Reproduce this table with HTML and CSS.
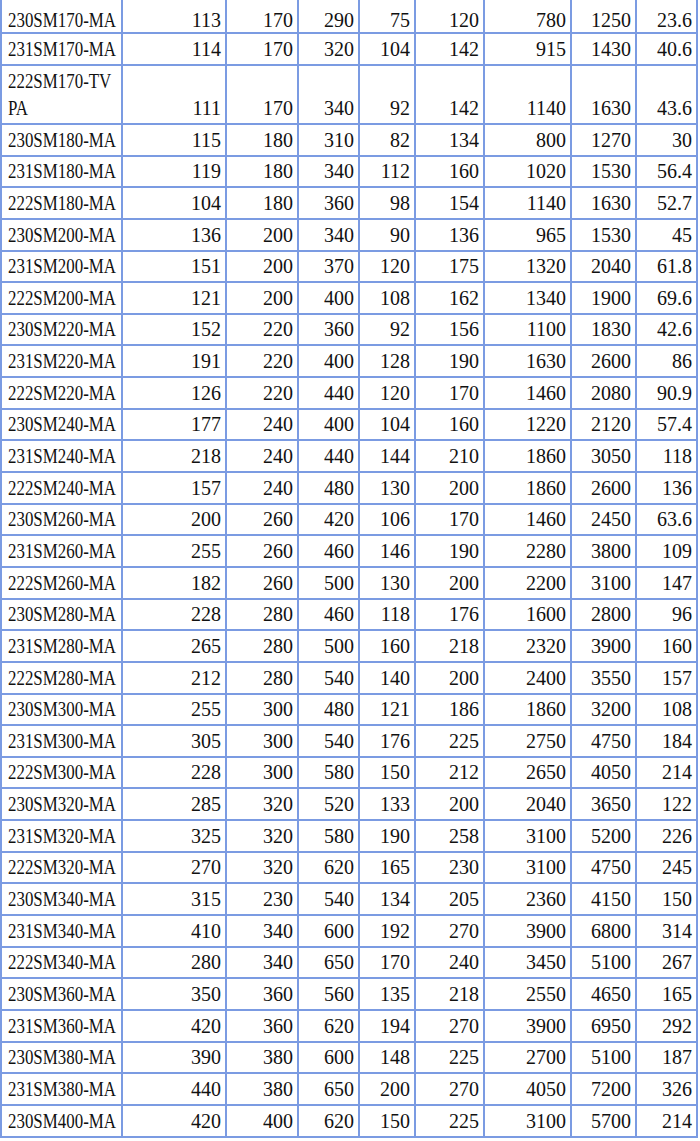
FILE: index.html
```html
<!DOCTYPE html>
<html lang="zh">
<head>
<meta charset="utf-8">
<title>Bearing table</title>
<link rel="stylesheet" href="styles.css">
</head>
<body>
<div class="sheet">
<div class="row first"><div class="c name"><span class="nm">230SM170-MA</span></div><div class="c">113</div><div class="c">170</div><div class="c">290</div><div class="c">75</div><div class="c">120</div><div class="c">780</div><div class="c">1250</div><div class="c">23.6</div></div>
<div class="row"><div class="c name"><span class="nm">231SM170-MA</span></div><div class="c">114</div><div class="c">170</div><div class="c">320</div><div class="c">104</div><div class="c">142</div><div class="c">915</div><div class="c">1430</div><div class="c">40.6</div></div>
<div class="row tall"><div class="c name"><span class="nm">222SM170-TV<br>PA</span></div><div class="c">111</div><div class="c">170</div><div class="c">340</div><div class="c">92</div><div class="c">142</div><div class="c">1140</div><div class="c">1630</div><div class="c">43.6</div></div>
<div class="row"><div class="c name"><span class="nm">230SM180-MA</span></div><div class="c">115</div><div class="c">180</div><div class="c">310</div><div class="c">82</div><div class="c">134</div><div class="c">800</div><div class="c">1270</div><div class="c">30</div></div>
<div class="row"><div class="c name"><span class="nm">231SM180-MA</span></div><div class="c">119</div><div class="c">180</div><div class="c">340</div><div class="c">112</div><div class="c">160</div><div class="c">1020</div><div class="c">1530</div><div class="c">56.4</div></div>
<div class="row"><div class="c name"><span class="nm">222SM180-MA</span></div><div class="c">104</div><div class="c">180</div><div class="c">360</div><div class="c">98</div><div class="c">154</div><div class="c">1140</div><div class="c">1630</div><div class="c">52.7</div></div>
<div class="row"><div class="c name"><span class="nm">230SM200-MA</span></div><div class="c">136</div><div class="c">200</div><div class="c">340</div><div class="c">90</div><div class="c">136</div><div class="c">965</div><div class="c">1530</div><div class="c">45</div></div>
<div class="row"><div class="c name"><span class="nm">231SM200-MA</span></div><div class="c">151</div><div class="c">200</div><div class="c">370</div><div class="c">120</div><div class="c">175</div><div class="c">1320</div><div class="c">2040</div><div class="c">61.8</div></div>
<div class="row"><div class="c name"><span class="nm">222SM200-MA</span></div><div class="c">121</div><div class="c">200</div><div class="c">400</div><div class="c">108</div><div class="c">162</div><div class="c">1340</div><div class="c">1900</div><div class="c">69.6</div></div>
<div class="row"><div class="c name"><span class="nm">230SM220-MA</span></div><div class="c">152</div><div class="c">220</div><div class="c">360</div><div class="c">92</div><div class="c">156</div><div class="c">1100</div><div class="c">1830</div><div class="c">42.6</div></div>
<div class="row"><div class="c name"><span class="nm">231SM220-MA</span></div><div class="c">191</div><div class="c">220</div><div class="c">400</div><div class="c">128</div><div class="c">190</div><div class="c">1630</div><div class="c">2600</div><div class="c">86</div></div>
<div class="row"><div class="c name"><span class="nm">222SM220-MA</span></div><div class="c">126</div><div class="c">220</div><div class="c">440</div><div class="c">120</div><div class="c">170</div><div class="c">1460</div><div class="c">2080</div><div class="c">90.9</div></div>
<div class="row"><div class="c name"><span class="nm">230SM240-MA</span></div><div class="c">177</div><div class="c">240</div><div class="c">400</div><div class="c">104</div><div class="c">160</div><div class="c">1220</div><div class="c">2120</div><div class="c">57.4</div></div>
<div class="row"><div class="c name"><span class="nm">231SM240-MA</span></div><div class="c">218</div><div class="c">240</div><div class="c">440</div><div class="c">144</div><div class="c">210</div><div class="c">1860</div><div class="c">3050</div><div class="c">118</div></div>
<div class="row"><div class="c name"><span class="nm">222SM240-MA</span></div><div class="c">157</div><div class="c">240</div><div class="c">480</div><div class="c">130</div><div class="c">200</div><div class="c">1860</div><div class="c">2600</div><div class="c">136</div></div>
<div class="row"><div class="c name"><span class="nm">230SM260-MA</span></div><div class="c">200</div><div class="c">260</div><div class="c">420</div><div class="c">106</div><div class="c">170</div><div class="c">1460</div><div class="c">2450</div><div class="c">63.6</div></div>
<div class="row"><div class="c name"><span class="nm">231SM260-MA</span></div><div class="c">255</div><div class="c">260</div><div class="c">460</div><div class="c">146</div><div class="c">190</div><div class="c">2280</div><div class="c">3800</div><div class="c">109</div></div>
<div class="row"><div class="c name"><span class="nm">222SM260-MA</span></div><div class="c">182</div><div class="c">260</div><div class="c">500</div><div class="c">130</div><div class="c">200</div><div class="c">2200</div><div class="c">3100</div><div class="c">147</div></div>
<div class="row"><div class="c name"><span class="nm">230SM280-MA</span></div><div class="c">228</div><div class="c">280</div><div class="c">460</div><div class="c">118</div><div class="c">176</div><div class="c">1600</div><div class="c">2800</div><div class="c">96</div></div>
<div class="row"><div class="c name"><span class="nm">231SM280-MA</span></div><div class="c">265</div><div class="c">280</div><div class="c">500</div><div class="c">160</div><div class="c">218</div><div class="c">2320</div><div class="c">3900</div><div class="c">160</div></div>
<div class="row"><div class="c name"><span class="nm">222SM280-MA</span></div><div class="c">212</div><div class="c">280</div><div class="c">540</div><div class="c">140</div><div class="c">200</div><div class="c">2400</div><div class="c">3550</div><div class="c">157</div></div>
<div class="row"><div class="c name"><span class="nm">230SM300-MA</span></div><div class="c">255</div><div class="c">300</div><div class="c">480</div><div class="c">121</div><div class="c">186</div><div class="c">1860</div><div class="c">3200</div><div class="c">108</div></div>
<div class="row"><div class="c name"><span class="nm">231SM300-MA</span></div><div class="c">305</div><div class="c">300</div><div class="c">540</div><div class="c">176</div><div class="c">225</div><div class="c">2750</div><div class="c">4750</div><div class="c">184</div></div>
<div class="row"><div class="c name"><span class="nm">222SM300-MA</span></div><div class="c">228</div><div class="c">300</div><div class="c">580</div><div class="c">150</div><div class="c">212</div><div class="c">2650</div><div class="c">4050</div><div class="c">214</div></div>
<div class="row"><div class="c name"><span class="nm">230SM320-MA</span></div><div class="c">285</div><div class="c">320</div><div class="c">520</div><div class="c">133</div><div class="c">200</div><div class="c">2040</div><div class="c">3650</div><div class="c">122</div></div>
<div class="row"><div class="c name"><span class="nm">231SM320-MA</span></div><div class="c">325</div><div class="c">320</div><div class="c">580</div><div class="c">190</div><div class="c">258</div><div class="c">3100</div><div class="c">5200</div><div class="c">226</div></div>
<div class="row"><div class="c name"><span class="nm">222SM320-MA</span></div><div class="c">270</div><div class="c">320</div><div class="c">620</div><div class="c">165</div><div class="c">230</div><div class="c">3100</div><div class="c">4750</div><div class="c">245</div></div>
<div class="row"><div class="c name"><span class="nm">230SM340-MA</span></div><div class="c">315</div><div class="c">230</div><div class="c">540</div><div class="c">134</div><div class="c">205</div><div class="c">2360</div><div class="c">4150</div><div class="c">150</div></div>
<div class="row"><div class="c name"><span class="nm">231SM340-MA</span></div><div class="c">410</div><div class="c">340</div><div class="c">600</div><div class="c">192</div><div class="c">270</div><div class="c">3900</div><div class="c">6800</div><div class="c">314</div></div>
<div class="row"><div class="c name"><span class="nm">222SM340-MA</span></div><div class="c">280</div><div class="c">340</div><div class="c">650</div><div class="c">170</div><div class="c">240</div><div class="c">3450</div><div class="c">5100</div><div class="c">267</div></div>
<div class="row"><div class="c name"><span class="nm">230SM360-MA</span></div><div class="c">350</div><div class="c">360</div><div class="c">560</div><div class="c">135</div><div class="c">218</div><div class="c">2550</div><div class="c">4650</div><div class="c">165</div></div>
<div class="row"><div class="c name"><span class="nm">231SM360-MA</span></div><div class="c">420</div><div class="c">360</div><div class="c">620</div><div class="c">194</div><div class="c">270</div><div class="c">3900</div><div class="c">6950</div><div class="c">292</div></div>
<div class="row"><div class="c name"><span class="nm">230SM380-MA</span></div><div class="c">390</div><div class="c">380</div><div class="c">600</div><div class="c">148</div><div class="c">225</div><div class="c">2700</div><div class="c">5100</div><div class="c">187</div></div>
<div class="row"><div class="c name"><span class="nm">231SM380-MA</span></div><div class="c">440</div><div class="c">380</div><div class="c">650</div><div class="c">200</div><div class="c">270</div><div class="c">4050</div><div class="c">7200</div><div class="c">326</div></div>
<div class="row"><div class="c name"><span class="nm">230SM400-MA</span></div><div class="c">420</div><div class="c">400</div><div class="c">620</div><div class="c">150</div><div class="c">225</div><div class="c">3100</div><div class="c">5700</div><div class="c">214</div></div>
</div>
</body>
</html>
```
FILE: styles.css
```css
html, body {
  margin: 0;
  padding: 0;
  background: #ffffff;
}

.sheet {
  width: 698px;
  box-sizing: border-box;
  border-left: 2px solid #7b9be2;
  display: grid;
  grid-template-columns: 121px 104px 72px 61px 56px 69px 87px 65px 61px;
  grid-template-rows: 34px 32px 59px;
  grid-auto-rows: 31.656px;
  font-family: "Liberation Serif", "Times New Roman", serif;
  font-size: 20px;
  color: #111111;
}

.row {
  display: contents;
}

.c {
  box-sizing: border-box;
  border-right: 2px solid #7b9be2;
  border-bottom: 2px solid #7b9be2;
  display: flex;
  align-items: flex-end;
  justify-content: flex-end;
  padding: 0 4px 1px 4px;
  line-height: 27px;
  white-space: nowrap;
  overflow: visible;
}

.first .c {
  line-height: 24px;
  padding-bottom: 0;
}

.c.name {
  justify-content: flex-start;
  padding-left: 6px;
}

.nm {
  display: inline-block;
  transform: scaleX(0.845);
  transform-origin: left bottom;
}
```
